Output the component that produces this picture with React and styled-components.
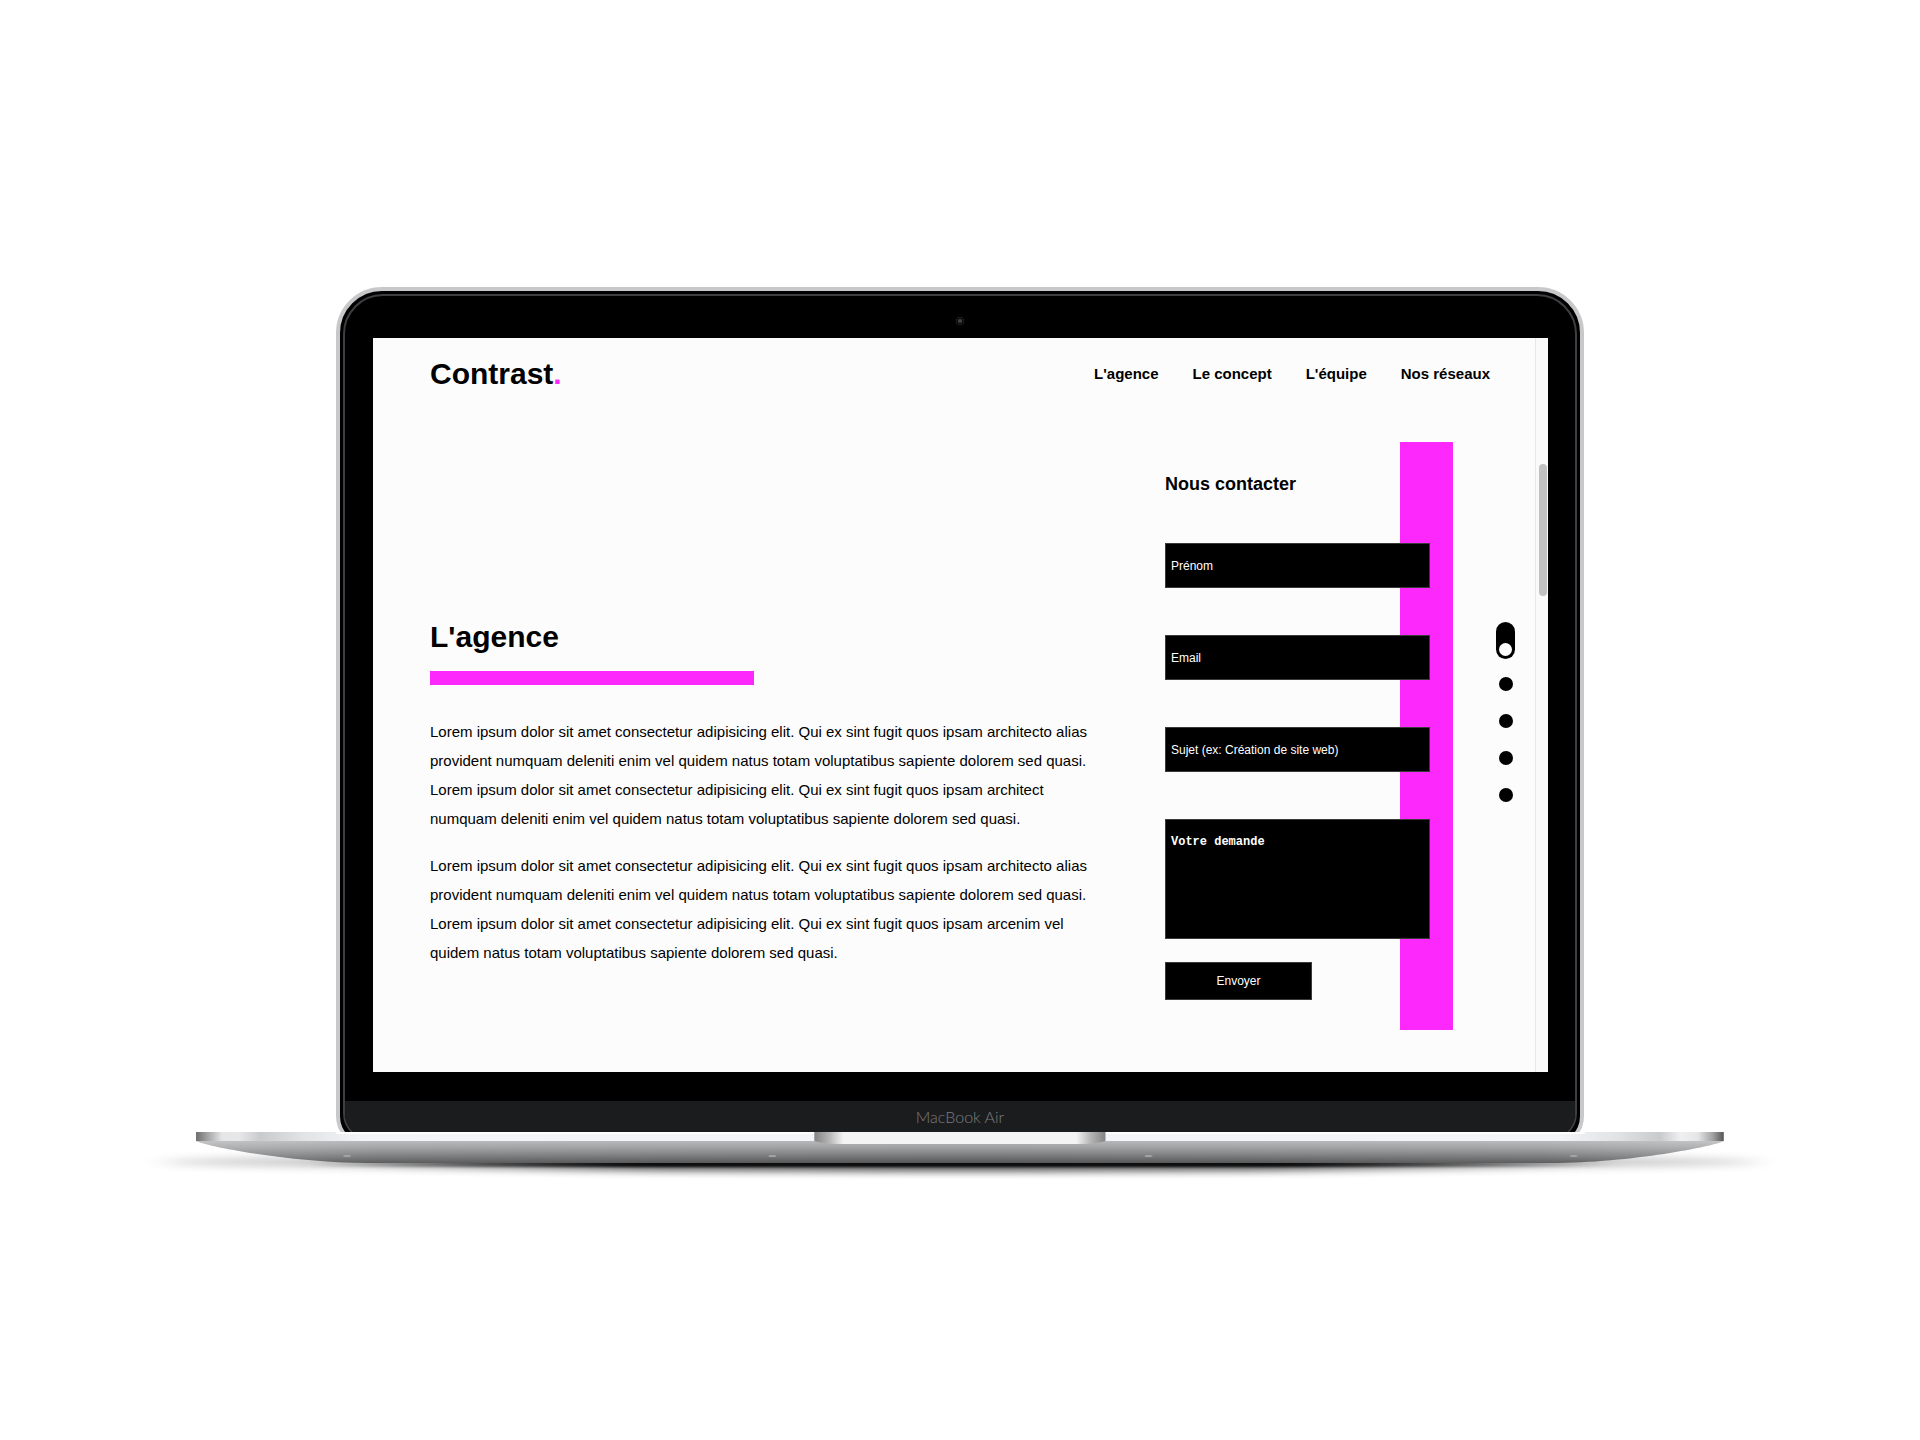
import React from "react";
import styled, { createGlobalStyle } from "styled-components";

const PINK = "#fc28fc";
const SANS = `"Liberation Sans", Helvetica, Arial, sans-serif`;

const GlobalStyle = createGlobalStyle`
  *, *::before, *::after { box-sizing: border-box; }
  body { margin: 0; background: #fff; color: #000; font-family: ${SANS}; }
  h1, h2, p { margin: 0; }
`;

/* ---------- Laptop ---------- */

const Stage = styled.div`
  min-height: 100vh;
  padding-top: 27px;
  display: flex;
  flex-direction: column;
  align-items: center;
  justify-content: center;
`;

const Lid = styled.div`
  width: 65%;
  min-width: 1120px;
  margin-bottom: -16px;
  padding: 3px;
  border: 4px solid #c8c8ca;
  border-radius: 46px 46px 32px 32px;
  background: #000;
`;

const Bezel = styled.div`
  border: 2px solid #3e3e40;
  border-radius: 40px 40px 28px 28px;
  overflow: hidden;
  background: #000;
`;

const CameraBar = styled.div`
  height: 42px;
  padding-top: 7px;
  display: flex;
  align-items: center;
  justify-content: center;
`;

const Chin = styled.div`
  height: 38px;
  margin-top: 29px;
  background: #1b1c1e;
  color: #7b7c7e;
  text-align: center;
  font: 300 16px/32px Lato, "Open Sans", sans-serif;
`;

const BaseDrawing = styled.svg`
  position: relative;
  display: block;
  width: 86.5%;
  min-width: 1490px;
  height: 48px;
`;

/* ---------- Browser window ---------- */

const Screen = styled.div`
  margin: 0 27px 0 28px;
  display: grid;
  grid-template-columns: 1fr 13px;
  background: #fcfcfc;
`;

const ScrollTrack = styled.div`
  padding: 126px 1px 0 3px;
  border-left: 1px solid #e8e8e8;
  background: #fafafa;
`;

const ScrollThumb = styled.div`
  height: 132px;
  border-radius: 4px;
  background: #c1c1c1;
`;

const Header = styled.header`
  height: 70px;
  padding: 2px 45px 0 57px;
  display: flex;
  align-items: center;
  justify-content: space-between;
`;

const Logo = styled.a`
  color: #000;
  font-size: 30px;
  font-weight: 700;
  line-height: 36px;
  text-decoration: none;
  span { color: ${PINK}; }
`;

const Menu = styled.nav`
  display: flex;
  gap: 34px;
`;

const MenuLink = styled.a`
  color: #000;
  font-size: 15px;
  font-weight: 700;
  line-height: 18px;
  text-decoration: none;
`;

const Main = styled.main`
  padding: 34px 20px 42px 57px;
  display: grid;
  grid-template-columns: 1fr 288px 19px;
  column-gap: 43px;
`;

const Article = styled.article`
  padding-top: 177px;
`;

const Title = styled.h1`
  font-size: 30px;
  line-height: 36px;
`;

const Rule = styled.div`
  width: 324px;
  max-width: 100%;
  height: 14px;
  margin: 16px 0 32px;
  background: ${PINK};
`;

const Paragraph = styled.p`
  max-width: 664px;
  font-size: 15px;
  line-height: 29px;
  & + & { margin-top: 18px; }
`;

const Contact = styled.section`
  display: grid;
  grid-template-columns: 235px 30px 23px;
`;

const PinkBand = styled.div`
  grid-area: 1 / 2 / 2 / 4;
  background: ${PINK};
`;

const Form = styled.form`
  grid-area: 1 / 1 / 2 / 3;
  padding: 31px 0 30px;
  display: flex;
  flex-direction: column;
`;

const FormTitle = styled.h2`
  margin-bottom: 48px;
  font-size: 18px;
  line-height: 22px;
`;

const Field = styled.input`
  width: 100%;
  height: 45px;
  margin: 0 0 47px;
  padding: 0 5px;
  border: 1px solid #3a3a3a;
  border-radius: 0;
  background: #000;
  color: #fff;
  font: 12px ${SANS};
  &::placeholder { color: #fff; opacity: 1; }
`;

const Message = styled.textarea`
  width: 100%;
  height: 120px;
  margin: 0 0 23px;
  padding: 15px 5px;
  border: 1px solid #3a3a3a;
  border-radius: 0;
  background: #000;
  color: #fff;
  font: 700 12px/14px "Liberation Mono", "Courier New", monospace;
  resize: none;
  &::placeholder { color: #fff; opacity: 1; }
`;

const Submit = styled.button`
  width: 147px;
  height: 38px;
  border: 1px solid #3a3a3a;
  background: #000;
  color: #fff;
  font: 12px ${SANS};
`;

const Pager = styled.nav`
  padding-top: 180px;
  display: flex;
  flex-direction: column;
  align-items: center;
  gap: 23px;
`;

const Dot = styled.a`
  width: 14px;
  height: 14px;
  border-radius: 50%;
  background: #000;
`;

const ActiveDot = styled.a`
  width: 19px;
  height: 37px;
  margin-bottom: -5px;
  padding: 3px;
  border-radius: 10px;
  display: flex;
  align-items: flex-end;
  background: #000;
  &::after {
    content: "";
    width: 13px;
    height: 13px;
    border-radius: 50%;
    background: #fff;
  }
`;

const links = ["L'agence", "Le concept", "L'équipe", "Nos réseaux"];

const paragraphs = [
  "Lorem ipsum dolor sit amet consectetur adipisicing elit. Qui ex sint fugit quos ipsam architecto alias provident numquam deleniti enim vel quidem natus totam voluptatibus sapiente dolorem sed quasi. Lorem ipsum dolor sit amet consectetur adipisicing elit. Qui ex sint fugit quos ipsam architect numquam deleniti enim vel quidem natus totam voluptatibus sapiente dolorem sed quasi.",
  "Lorem ipsum dolor sit amet consectetur adipisicing elit. Qui ex sint fugit quos ipsam architecto alias provident numquam deleniti enim vel quidem natus totam voluptatibus sapiente dolorem sed quasi. Lorem ipsum dolor sit amet consectetur adipisicing elit. Qui ex sint fugit quos ipsam arcenim vel quidem natus totam voluptatibus sapiente dolorem sed quasi.",
];

const fields = [
  { label: "Prénom", type: "text" },
  { label: "Email", type: "email" },
  { label: "Sujet (ex: Création de site web)", type: "text" },
];

function Camera() {
  return (
    <svg width="12" height="12" viewBox="0 0 12 12" aria-hidden="true">
      <circle cx="6" cy="6" r="4" fill="#0b0b0b" stroke="#1c1c1c" />
      <circle cx="6" cy="6" r="2" fill="#444" />
    </svg>
  );
}

function LaptopBase() {
  return (
    <BaseDrawing viewBox="0 0 1660 48" preserveAspectRatio="none" aria-hidden="true">
      <defs>
        <linearGradient id="under" x1="0" y1="0" x2="0" y2="1">
          <stop offset="0" stopColor="#b4b6b8" />
          <stop offset="0.25" stopColor="#a2a4a6" />
          <stop offset="0.6" stopColor="#808284" />
          <stop offset="1" stopColor="#545556" />
        </linearGradient>
        <linearGradient id="sheen" x1="0" y1="0" x2="1" y2="0">
          <stop offset="0" stopColor="#fff" stopOpacity="0.2" />
          <stop offset="0.12" stopColor="#fff" stopOpacity="0.05" />
          <stop offset="0.5" stopColor="#fff" stopOpacity="0" />
          <stop offset="0.88" stopColor="#fff" stopOpacity="0.05" />
          <stop offset="1" stopColor="#fff" stopOpacity="0.2" />
        </linearGradient>
        <linearGradient id="edge" x1="0" y1="0" x2="1" y2="0">
          <stop offset="0" stopColor="#6e6e6e" />
          <stop offset="0.007" stopColor="#a0a0a0" />
          <stop offset="0.017" stopColor="#e6e6e6" />
          <stop offset="0.028" stopColor="#e8e8ea" />
          <stop offset="0.042" stopColor="#c9cacb" />
          <stop offset="0.07" stopColor="#e2e3e5" />
          <stop offset="0.11" stopColor="#f4f5f8" />
          <stop offset="0.89" stopColor="#f4f5f8" />
          <stop offset="0.93" stopColor="#e2e3e5" />
          <stop offset="0.958" stopColor="#c9cacb" />
          <stop offset="0.972" stopColor="#f0f0f2" />
          <stop offset="0.983" stopColor="#e6e6e6" />
          <stop offset="0.993" stopColor="#a0a0a0" />
          <stop offset="1" stopColor="#555" />
        </linearGradient>
        <linearGradient id="notch" x1="0" y1="0" x2="1" y2="0">
          <stop offset="0" stopColor="#838383" />
          <stop offset="0.05" stopColor="#b4b4b4" />
          <stop offset="0.1" stopColor="#f4f4f4" />
          <stop offset="0.9" stopColor="#f4f4f4" />
          <stop offset="0.95" stopColor="#b4b4b4" />
          <stop offset="1" stopColor="#838383" />
        </linearGradient>
        <linearGradient id="dark" x1="0" y1="0" x2="1" y2="0">
          <stop offset="0" stopColor="#000" stopOpacity="0" />
          <stop offset="0.25" stopColor="#000" stopOpacity="0.85" />
          <stop offset="0.75" stopColor="#000" stopOpacity="0.85" />
          <stop offset="1" stopColor="#000" stopOpacity="0" />
        </linearGradient>
        <filter id="soft" x="-5%" y="-200%" width="110%" height="500%">
          <feGaussianBlur stdDeviation="14 4" />
        </filter>
        <filter id="tight" x="-5%" y="-200%" width="110%" height="500%">
          <feGaussianBlur stdDeviation="8 1" />
        </filter>
      </defs>
      <ellipse cx="830" cy="30" rx="800" ry="8" fill="#000" opacity="0.22" filter="url(#soft)" />
      <ellipse cx="830" cy="30" rx="640" ry="9" fill="url(#dark)" opacity="0.7" filter="url(#soft)" />
      <rect x="170" y="24" width="1320" height="11" fill="url(#dark)" filter="url(#tight)" />
      <path d="M66 9 H1593 C1584 14 1500 31 1420 31 H239 C160 31 75 14 66 9Z" fill="url(#under)" />
      <path d="M66 9 H1593 C1584 14 1500 31 1420 31 H239 C160 31 75 14 66 9Z" fill="url(#sheen)" />
      <rect x="66" y="0" width="1527" height="9" fill="url(#edge)" />
      <rect x="206" y="0" width="1248" height="2" fill="#fff" />
      <path d="M684 0 H975 V9 Q966 12 950 12 H709 Q693 12 684 9Z" fill="url(#notch)" />
      <g fill="#a4a5a6">
        <ellipse cx="217" cy="24" rx="4" ry="1" />
        <ellipse cx="642" cy="24" rx="4" ry="1" />
        <ellipse cx="1018" cy="24" rx="4" ry="1" />
        <ellipse cx="1443" cy="24" rx="4" ry="1" />
      </g>
    </BaseDrawing>
  );
}

export default function App() {
  return (
    <>
      <GlobalStyle />
      <Stage>
        <Lid>
          <Bezel>
            <CameraBar>
              <Camera />
            </CameraBar>
            <Screen>
              <div>
                <Header>
                  <Logo href="#">
                    Contrast<span>.</span>
                  </Logo>
                  <Menu>
                    {links.map((text) => (
                      <MenuLink href="#" key={text}>
                        {text}
                      </MenuLink>
                    ))}
                  </Menu>
                </Header>
                <Main>
                  <Article>
                    <Title>L'agence</Title>
                    <Rule />
                    {paragraphs.map((text) => (
                      <Paragraph key={text}>{text}</Paragraph>
                    ))}
                  </Article>
                  <Contact>
                    <PinkBand />
                    <Form>
                      <FormTitle>Nous contacter</FormTitle>
                      {fields.map(({ label, type }) => (
                        <Field key={label} type={type} placeholder={label} aria-label={label} />
                      ))}
                      <Message placeholder="Votre demande" aria-label="Votre demande" />
                      <Submit type="button">Envoyer</Submit>
                    </Form>
                  </Contact>
                  <Pager>
                    <ActiveDot href="#" aria-label="Section 1" />
                    {[2, 3, 4, 5].map((n) => (
                      <Dot href="#" key={n} aria-label={`Section ${n}`} />
                    ))}
                  </Pager>
                </Main>
              </div>
              <ScrollTrack>
                <ScrollThumb />
              </ScrollTrack>
            </Screen>
            <Chin>MacBook Air</Chin>
          </Bezel>
        </Lid>
        <LaptopBase />
      </Stage>
    </>
  );
}
